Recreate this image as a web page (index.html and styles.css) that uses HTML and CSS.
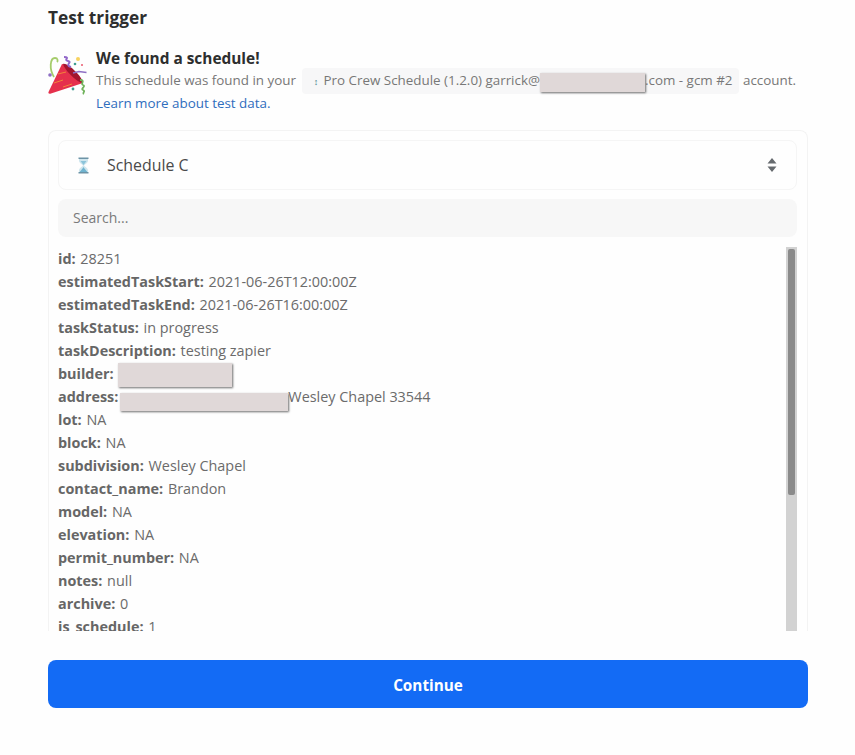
FILE: index.html
```html
<!DOCTYPE html>
<html lang="en">
<head>
<meta charset="utf-8">
<title>Test trigger</title>
<link rel="stylesheet" href="styles.css">
</head>
<body>
<main class="page">
  <h1 class="title">Test trigger</h1>
  <section class="found">
    <svg class="popper" viewBox="0 0 40 40" width="40" height="40" aria-hidden="true">
      <path d="M0.500 37 L14 9 C20 9 33 21 35 28 L3 38.500 C1 39 0 38.500 0.500 37 Z" fill="#e5304c"/>
      <path d="M15 9 C19 7 34 21 35 28 C31 29 17 16 15 9 Z" fill="#a3142e"/>
      <path d="M6 28 L15 25 M10 19 L18 17 M15 32 L24 29" stroke="#f2843a" stroke-width="1" fill="none"/>
      <path d="M6 22 C1 14 2 3 7 3 C10 3 10 6 9 7" stroke="#a5cc6b" stroke-width="1.800" fill="none"/>
      <path d="M16 2 C23 2 15 5 20 6 C25 7 16 10 23 12" stroke="#9268c9" stroke-width="2" fill="none"/>
      <path d="M32 25 C38 25 32 29 35 30 C38.500 31 32 34 35 35 C38 36 34 38 36 39" stroke="#6fb25a" stroke-width="1.800" fill="none"/>
      <path d="M25 18 L31 16.500 L38.500 17.500" stroke="#8e6fc4" stroke-width="1.300" fill="none"/>
      <circle cx="30" cy="4" r="2" fill="#f7d25f"/>
      <circle cx="2" cy="20" r="1.800" fill="#8e6fc4"/>
      <circle cx="25" cy="34" r="1.400" fill="#3f9d8f"/>
      <circle cx="27" cy="9" r="1.300" fill="#3f9d8f"/>
      <circle cx="34" cy="10" r="1" fill="#ea596e"/>
    </svg>
    <div class="found-text">
      <h2 class="found-title">We found a schedule!</h2>
      <p class="found-line">This schedule was found in your <span class="chip"><span class="chip-icon">↕</span>Pro Crew Schedule (1.2.0) garrick@<span class="redact redact-email"></span>.com - gcm #2</span> account.</p>
      <a class="learn" href="#">Learn more about test data.</a>
    </div>
  </section>

  <section class="card">
    <div class="select">
      <svg class="hourglass" viewBox="0 0 13 17" width="13" height="17" aria-hidden="true">
        <path d="M2 1 H11 V3.500 C11 6 7.800 7.300 7 8.500 C7.800 9.700 11 11 11 13.500 V16 H2 V13.500 C2 11 5.200 9.700 6 8.500 C5.200 7.300 2 6 2 3.500 Z" fill="#cfe6ee"/>
        <path d="M3 14.500 C4.500 12.500 6 11.500 6.500 10 C7 11.500 8.500 12.500 10 14.500 V16 H3 Z" fill="#6fb3cf"/>
        <path d="M3.500 4 H9.500 L6.500 8 Z" fill="#8cc4da"/>
        <rect x="1.500" y="0.500" width="10" height="1.500" fill="#6d93a6"/>
        <rect x="1.500" y="15" width="10" height="1.500" fill="#6d93a6"/>
      </svg>
      <span class="select-label">Schedule C</span>
      <svg class="updown" viewBox="0 0 10 16" width="10" height="16" aria-hidden="true">
        <path d="M5 1 L9.500 6.500 H0.500 Z M5 15 L0.500 9.500 H9.500 Z" fill="#666a6e"/>
      </svg>
    </div>
    <div class="search">Search...</div>
    <div class="results">
      <div class="rows">
        <div class="row"><b>id:</b> 28251</div>
        <div class="row"><b>estimatedTaskStart:</b> 2021-06-26T12:00:00Z</div>
        <div class="row"><b>estimatedTaskEnd:</b> 2021-06-26T16:00:00Z</div>
        <div class="row"><b>taskStatus:</b> in progress</div>
        <div class="row"><b>taskDescription:</b> testing zapier</div>
        <div class="row"><b>builder:</b> <span class="redact redact-builder"></span></div>
        <div class="row"><b>address:</b><span class="redact redact-address"></span>Wesley Chapel 33544</div>
        <div class="row"><b>lot:</b> NA</div>
        <div class="row"><b>block:</b> NA</div>
        <div class="row"><b>subdivision:</b> Wesley Chapel</div>
        <div class="row"><b>contact_name:</b> Brandon</div>
        <div class="row"><b>model:</b> NA</div>
        <div class="row"><b>elevation:</b> NA</div>
        <div class="row"><b>permit_number:</b> NA</div>
        <div class="row"><b>notes:</b> null</div>
        <div class="row"><b>archive:</b> 0</div>
        <div class="row"><b>is_schedule:</b> 1</div>
      </div>
      <div class="scrolltrack"><div class="scrollthumb"></div></div>
    </div>
  </section>

  <button class="continue" type="button">Continue</button>
</main>
</body>
</html>
```
FILE: styles.css
```css
* { box-sizing: border-box; }
html, body { margin: 0; height: 755px; overflow: hidden; background: #fefefe; }
body { font-family: "Open Sans", sans-serif; color: #6b6b6b; }
.page { width: 760px; margin-left: 48px; padding-top: 7px; display: flex; flex-direction: column; }
.title { margin: 0; font-size: 17.3px; line-height: 22px; font-weight: 700; color: #2d2e2e; }
.found { display: flex; gap: 8px; margin-top: 19px; height: 82px; }
.popper { flex: none; margin-top: 7px; }
.found-text { min-width: 0; flex: 1; }
.found-title { margin: 1px 0 0; font-size: 15.4px; line-height: 19px; font-weight: 700; color: #2d2e2e; }
.found-line { margin: 0; font-size: 13.4px; line-height: 25px; white-space: nowrap; color: #777; }
.chip { display: inline-block; background: #f7f7f8; border-radius: 4px; padding: 0 6px; margin: 0 1px 0 3px; }
.chip-icon { display: inline-block; width: 15px; font-size: 9px; color: #3b7d85; text-align: center; }
.learn { display: block; font-size: 13.4px; line-height: 20px; margin-top: -1px; color: #2f6dbd; text-decoration: none; }
.redact { display: inline-block; background: #e0d8d8; box-shadow: 1px 1px 2px #6e6e6e; vertical-align: top; }
.redact-email { width: 105px; height: 19px; margin-top: 5px; }
.redact-builder { width: 114px; height: 24px; margin-top: 1px; }
.redact-address { width: 168px; height: 18px; margin: 8px 0 0 1px; }
.card { height: 501px; border: 1px solid #f3f3f3; border-bottom: 0; border-radius: 8px 8px 0 0; padding: 9px 10px 0 9px; display: flex; flex-direction: column; }
.select { height: 50px; border: 1px solid #f5f5f5; border-radius: 8px; display: flex; align-items: center; padding: 0 19px 0 18px; }
.hourglass { flex: none; }
.select-label { margin-left: 17px; font-size: 15.9px; font-weight: 500; color: #4a4a4a; flex: 1; }
.updown { flex: none; }
.search { height: 38px; margin-top: 9px; background: #f7f7f7; border-radius: 8px; padding: 0 15px; font-size: 14px; line-height: 38px; font-weight: 500; color: #7a7a7a; }
.results { flex: 1; margin-top: 10px; display: flex; overflow: hidden; min-height: 0; }
.rows { flex: 1; min-width: 0; }
.row { font-size: 14.4px; line-height: 23px; height: 23px; white-space: nowrap; }
.row b { font-weight: 700; color: #666; margin-right: 1px; }
.scrolltrack { flex: none; width: 11px; background: #d2d2d2; padding: 2px 2px 0; }
.scrollthumb { height: 246px; background: #8a8a8a; border-radius: 2px; }
.continue { margin-top: 29px; height: 48px; width: 760px; padding: 2px 0 0; border: 0; border-radius: 8px; background: #136bf5; color: #fff; font: 700 15.3px "Open Sans", sans-serif; }
```
